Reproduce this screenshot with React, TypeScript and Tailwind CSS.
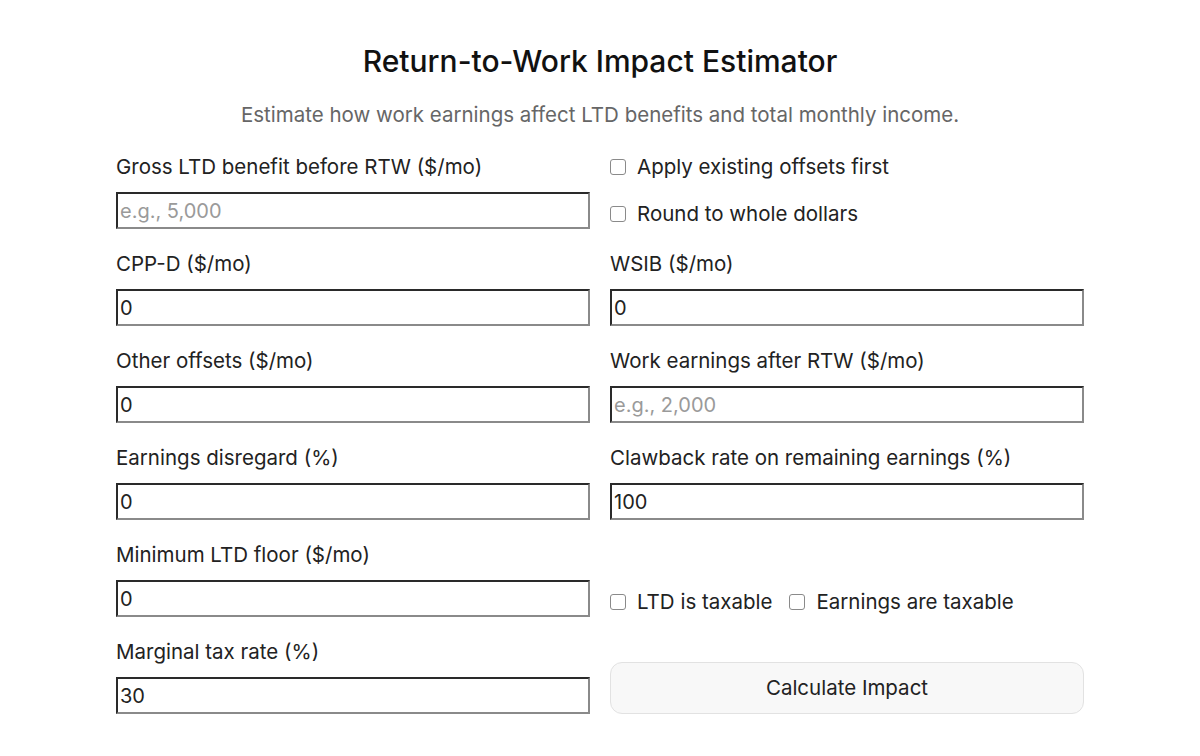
const inputCls =
  'block w-full h-[37px] border-2 border-t-[#2a2a2a] border-l-[#2a2a2a] border-b-[#8a8a8a] border-r-[#8a8a8a] bg-white px-[2px] text-[20px] text-[#222] placeholder:text-[#9a9a9a] outline-none';

function Field({ label, value, placeholder }: { label: string; value?: string; placeholder?: string }) {
  return (
    <div className="flex flex-col">
      <label className="text-[20.5px] leading-[24px] text-[#222] mb-[13px]">{label}</label>
      <input type="text" className={inputCls} defaultValue={value} placeholder={placeholder} />
    </div>
  );
}

function Check({ label }: { label: string }) {
  return (
    <label className="flex items-center gap-[11px] text-[20.5px] leading-[24px] text-[#222]">
      <span className="w-[16px] h-[16px] rounded-[3px] border border-[#8a8a8a] bg-white shrink-0" />
      {label}
    </label>
  );
}

export default function App() {
  return (
    <div className="min-h-screen bg-white font-['Inter','Liberation_Sans',sans-serif]">
      <div className="w-[968px] mx-auto pt-[43px]">
        <h1 className="text-center text-[30px] leading-[36px] font-medium text-[#111]">
          Return-to-Work Impact Estimator
        </h1>
        <p className="text-center text-[20.5px] leading-[24px] text-[#666] mt-[24px]">
          Estimate how work earnings affect LTD benefits and total monthly income.
        </p>

        <div className="grid grid-cols-2 gap-x-[20px] gap-y-[23px] mt-[28px]">
          <Field label="Gross LTD benefit before RTW ($/mo)" placeholder="e.g., 5,000" />
          <div className="flex flex-col gap-[23px]">
            <Check label="Apply existing offsets first" />
            <Check label="Round to whole dollars" />
          </div>

          <Field label="CPP-D ($/mo)" value="0" />
          <Field label="WSIB ($/mo)" value="0" />

          <Field label="Other offsets ($/mo)" value="0" />
          <Field label="Work earnings after RTW ($/mo)" placeholder="e.g., 2,000" />

          <Field label="Earnings disregard (%)" value="0" />
          <Field label="Clawback rate on remaining earnings (%)" value="100" />

          <Field label="Minimum LTD floor ($/mo)" value="0" />
          <div className="flex items-end gap-[17px] pb-[3px]">
            <Check label="LTD is taxable" />
            <Check label="Earnings are taxable" />
          </div>

          <Field label="Marginal tax rate (%)" value="30" />
          <div className="flex items-end">
            <button className="w-full h-[52px] rounded-[12px] border border-[#e2e2e2] bg-[#f8f8f8] text-[20.5px] text-[#222]">
              Calculate Impact
            </button>
          </div>
        </div>
      </div>
    </div>
  );
}
